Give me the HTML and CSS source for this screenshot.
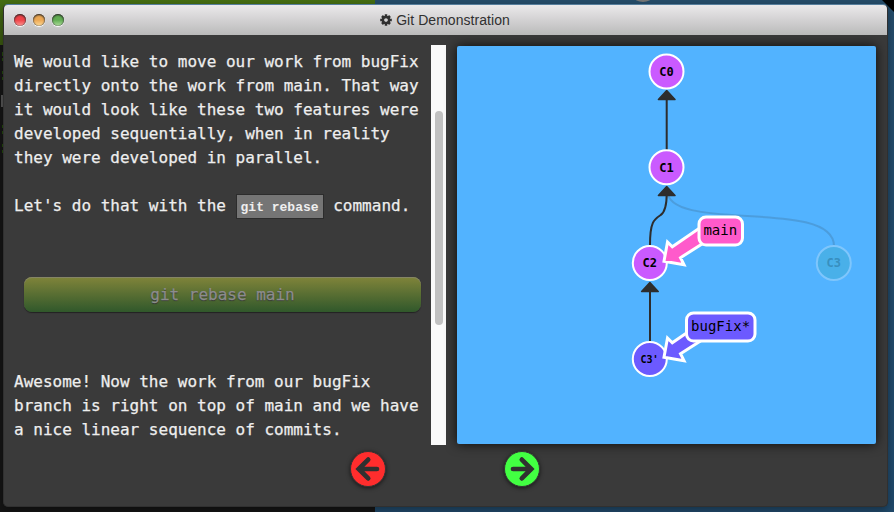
FILE: index.html
```html
<!DOCTYPE html>
<html lang="en">
<head>
<meta charset="utf-8">
<title>Git Demonstration</title>
<link rel="stylesheet" href="styles.css">
</head>
<body>
<div class="desktop">
  <svg class="backdrop" viewBox="0 0 894 512">
    <path class="black" d="M882 0H894V12Z"/>
    <ellipse class="knob" cx="643" cy="-3" rx="9" ry="5"/>
    <path class="code-marks" d="M2.500 52v4M2.500 58v3M2.500 71v3M2.500 77v3M2.500 125v3M2.500 131v3M2.500 144v3M2.500 150v3"/>
    <path class="caret" d="M2 95v12"/>
  </svg>
  <section class="window">
    <header class="titlebar">
      <div class="lights"><i class="light red"></i><i class="light amber"></i><i class="light green"></i></div>
      <h1><svg class="gear" viewBox="-6 -6 12 12"><path d="M0-5.800V5.800M-5.800 0H5.800M-4-4L4 4M4-4L-4 4"/><circle r="3.100"/></svg>Git Demonstration</h1>
    </header>
    <main class="content">
      <article class="lesson">
        <div class="copy">
          <p>We would like to move our work from bugFix<br>directly onto the work from main. That way<br>it would look like these two features were<br>developed sequentially, when in reality<br>they were developed in parallel.</p>
          <p class="hint">Let's do that with the <code>git rebase</code> command.</p>
          <button class="command">git rebase main</button>
          <p>Awesome! Now the work from our bugFix<br>branch is right on top of main and we have<br>a nice linear sequence of commits.</p>
        </div>
        <div class="scrollbar"><div class="thumb"></div></div>
      </article>
      <div class="canvas">
        <svg class="graph" viewBox="457 46 419 398">
          <g class="edges">
            <path class="faded" d="M667 190C667 234 834 197 834 246"/>
            <path d="M666.700 150V98M666.700 194C666.700 207 664.500 212.500 660.500 215.200C654 219.500 650 222 650 245M650 341V290"/>
            <path class="head" d="M666.700 90.500l8.300 9h-16.600ZM666.700 186.500l8.300 9h-16.600ZM649.900 282.500l8.300 9h-16.600Z"/>
          </g>
          <g class="commits">
            <circle cx="666.500" cy="71.500" r="17"/><circle cx="666.500" cy="167.300" r="17"/><circle cx="649.800" cy="263" r="17"/>
            <circle class="current" cx="649.800" cy="359" r="17"/><circle class="old" cx="833.800" cy="263" r="17"/>
          </g>
          <g class="ids">
            <text x="666.500" y="75.800">C0</text><text x="666.500" y="171.500">C1</text><text x="649.800" y="267.300">C2</text>
            <text class="small" x="649.500" y="362.800">C3'</text><text class="dim" x="833.800" y="267.300">C3</text>
          </g>
          <g class="branch main">
            <path d="M664 261.200L667.500 242L672.300 246.800L701 227L709 239.500L680.500 257.700L684 264.700Z"/>
            <rect x="699" y="217" width="43.500" height="28" rx="7"/>
            <text x="720.300" y="235">main</text>
          </g>
          <g class="branch bugfix">
            <path d="M664 357.200L667.500 338L672.300 342.800L701 323L709 335.500L680.500 353.700L684 360.700Z"/>
            <rect x="686.500" y="313" width="68.500" height="28" rx="7"/>
            <text x="720.600" y="331">bugFix*</text>
          </g>
        </svg>
      </div>
    </main>
    <nav class="pager">
      <a class="step back"><svg viewBox="0 0 36 36"><path d="M27.500 18H9M18.200 8L8.200 18L18.200 28"/></svg></a>
      <a class="step next"><svg viewBox="0 0 36 36"><path d="M8.500 18H27M17.800 8L27.800 18L17.800 28"/></svg></a>
    </nav>
  </section>
</div>
</body>
</html>
```
FILE: styles.css
```css
* { box-sizing: border-box; }
body { margin: 0; overflow: hidden; }
.desktop {
  position: relative;
  width: 894px;
  height: 512px;
  padding: 4px 6px 5px 3px;
  background:
    linear-gradient(#456e12, #385510) 0 0 / 375px 45px no-repeat,
    linear-gradient(#151515, #151515) 0 0 / 375px 512px no-repeat,
    linear-gradient(#254c6a, #20496a);
}
.backdrop { position: absolute; inset: 0; width: 894px; height: 512px; }
.black { fill: #000; }
.knob { fill: #777; }
.code-marks { stroke: #234a0c; stroke-width: 1; }
.caret { stroke: #555; stroke-width: 2; }
.window {
  position: relative;
  height: 503px;
  border: 1px solid #303030;
  border-top-color: #557d9c;
  border-radius: 5px;
  background: #3a3a3a;
  box-shadow: 0 3px 8px rgba(0, 0, 0, .35);
}
.titlebar {
  position: relative;
  display: flex;
  align-items: center;
  justify-content: center;
  height: 30px;
  border-radius: 4px 4px 0 0;
  background: linear-gradient(#ebe9eb, #bababa);
}
.titlebar h1 {
  display: flex;
  align-items: center;
  gap: 4px;
  margin: 0 1px 0 0;
  font: 14px/20px "Liberation Sans", Arial, sans-serif;
  letter-spacing: .05px;
  color: #303030;
}
.gear { width: 12px; height: 12px; fill: none; stroke: #303030; stroke-width: 2.500; }
.gear circle { fill: #d2d1d2; }
.lights { position: absolute; left: 10px; top: 9px; display: flex; gap: 7px; }
.light { width: 12px; height: 12px; border-radius: 50%; box-shadow: inset 0 1px 2px #222, inset 0 0 1px #444, 0 1px 1px #fff; }
.red { background: linear-gradient(#ef4348 50%, #ff9a96); }
.amber { background: linear-gradient(#eca854 50%, #ffdc98); }
.green { background: linear-gradient(#62ad53 50%, #b0e09e); }
.content { display: flex; gap: 11px; padding: 10px 11px 0 10px; }
.lesson { display: flex; flex: none; width: 432px; height: 400px; }
.copy {
  flex: 1;
  padding-top: 5px;
  color: #eee;
  font: 16px/24px "DejaVu Sans Mono", monospace;
  -webkit-text-stroke: .25px;
  white-space: nowrap;
}
.copy p { margin: 0; }
.copy .hint { height: 24px; margin: 24px 0 59px; }
code {
  display: inline-block;
  height: 25px;
  margin-top: -1px;
  padding: 0 4px;
  border: 1px solid #2c2c2c;
  background: #757575;
  color: #eee;
  font: bold 13px/25px "Liberation Mono", monospace;
  -webkit-text-stroke: 0;
}
.command {
  display: block;
  width: 397px;
  height: 35px;
  margin: 0 0 58px 10px;
  padding: 0;
  border: 0;
  border-radius: 8px;
  background: linear-gradient(#80843a, #30582b);
  box-shadow: 0 1px 1px #222, inset 0 1px #858565;
  color: #8c8c8c;
  font: inherit;
  -webkit-text-stroke: .25px;
  text-shadow: 0 1px 1px #333;
}
.scrollbar { width: 15px; height: 400px; padding: 66px 3px 0 4px; background: #fafafa; }
.thumb { height: 214px; border-radius: 4px; background: #c1c1c1; }
.canvas {
  width: 419px;
  height: 398px;
  margin-top: 1px;
  border-radius: 2px;
  background: #52b3ff;
  box-shadow: 0 0 12px rgba(0, 0, 0, .8);
}
.graph { display: block; width: 419px; height: 398px; }
.edges path { fill: none; stroke: #2d2d2d; stroke-width: 2; }
.edges .faded { stroke-opacity: .16; }
.edges .head { fill: #2d2d2d; stroke-width: 1.500; stroke-linejoin: round; }
.commits circle { fill: #ca5aff; stroke: #fff; stroke-width: 2; }
.commits .current { fill: #6c5aff; }
.commits .old { fill: #49b0e9; stroke: #7fc6fc; }
.graph text { font-family: "DejaVu Sans Mono", monospace; text-anchor: middle; }
.ids text { font-size: 12px; font-weight: bold; }
.ids .small { font-size: 10px; }
.ids .dim { fill: #388fbf; }
.branch { stroke: #fff; stroke-width: 3; }
.branch text { stroke: none; fill: #000; font-size: 14px; }
.main { fill: #ff5acb; }
.bugfix { fill: #6c5aff; }
.pager { display: flex; gap: 118px; margin: 6px 0 0 346px; }
.step {
  width: 36px;
  height: 36px;
  border: 1px solid #343434;
  border-radius: 50%;
  box-shadow: 0 1px 4px rgba(0, 0, 0, .6);
}
.step svg { display: block; width: 34px; height: 34px; fill: none; stroke: #303030; stroke-width: 5; stroke-linejoin: miter; stroke-linecap: round; }
.back { background: #ff2d2d; }
.next { background: #42ff42; }
```
